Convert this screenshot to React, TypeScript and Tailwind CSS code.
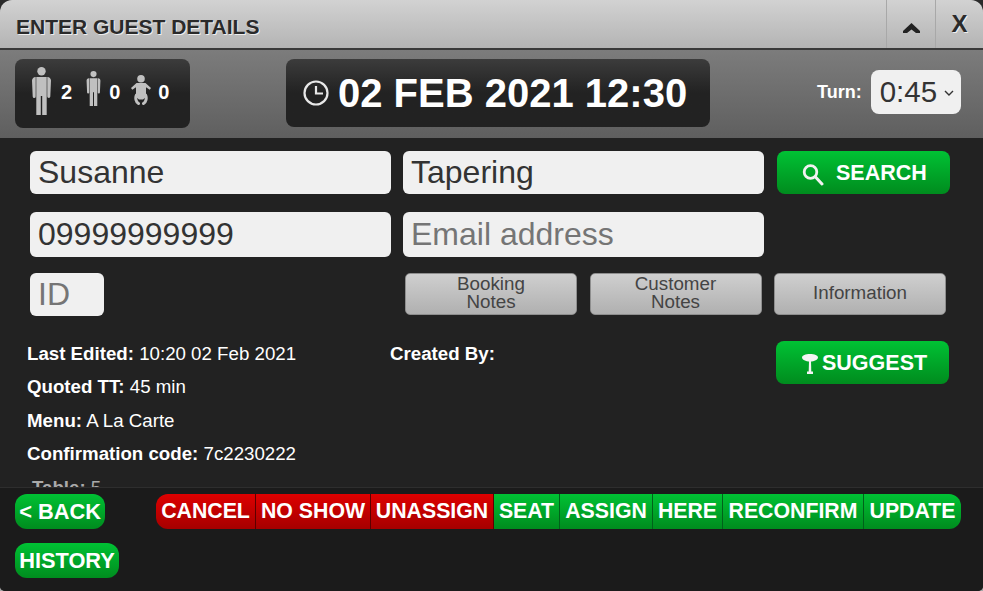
import React from 'react';

const PersonIcon = ({ className }: { className: string }) => (
  <svg viewBox="0 0 19 48" className={className} fill="#c0c0c0">
    <circle cx="9.500" cy="4.200" r="4.200" />
    <path d="M3.700 10V29.500a1.500 1.500 0 0 1-3 0L0 13.500A3.500 3.500 0 0 1 3.700 10z" />
    <path d="M15.300 10V29.500a1.500 1.500 0 0 0 3 0l.7-16A3.500 3.500 0 0 0 15.300 10z" />
    <path d="M4.300 10h10.400v38H10.200V29H8.800v19H4.300z" />
  </svg>
);

const BabyIcon = ({ className }: { className: string }) => (
  <svg viewBox="0 0 20 30" className={className} fill="#c0c0c0">
    <circle cx="10" cy="3.800" r="3.800" />
    <path d="M5.500 8h9l5.500 5-1.300 1.800-3.700-2.600v7h-10v-7l-3.700 2.600L0 13z" />
    <path d="M5 19h10v3l-3 2.500H8L5 22z" />
    <path d="M5.500 20C4 23 5 27 7.500 28.500M14.500 20C16 23 15 27 12.500 28.500" fill="none" stroke="#c0c0c0" strokeWidth="3" strokeLinecap="round" />
  </svg>
);

const ClockIcon = () => (
  <svg viewBox="0 0 26 26" className="w-[26px] h-[26px]" fill="none" stroke="#e8e8e8" strokeWidth="2.200">
    <circle cx="13" cy="13" r="11.500" />
    <path d="M13 6v7.500h7" />
  </svg>
);

const SearchIcon = () => (
  <svg viewBox="0 0 24 24" className="w-[24px] h-[24px] mt-[2px]" fill="none" stroke="#f2f2f2">
    <circle cx="10.500" cy="9" r="6.300" strokeWidth="2.800" />
    <path d="M15.500 14l6.500 7" strokeWidth="3" strokeLinecap="round" />
  </svg>
);

const TableIcon = () => (
  <svg viewBox="0 0 16 20" className="w-[16px] h-[20px]" fill="#f4f4f4">
    <path d="M0 3.500C0 1.500 3.500 0 8 0s8 1.500 8 3.500S12.500 7.500 8 7.500 0 5.500 0 3.500z" />
    <path d="M7 7h2l.3 11H6.700z" />
    <path d="M5 17.500h6V20H5z" />
  </svg>
);

const fieldClass =
  "bg-[#f0f0f0] rounded-[6px] px-2 pb-[2px] text-[32px] text-[#333] placeholder:text-[#757575] outline-none font-['Liberation_Sans',sans-serif]";

const greenGradient = 'bg-gradient-to-b from-[#00c234] to-[#008c1e]';
const redGradient = 'bg-gradient-to-b from-[#de0000] to-[#a60000]';
const greyGradient = 'bg-gradient-to-b from-[#cfcfcf] to-[#b0b0b0]';

const NoteButton = ({ children }: { children: React.ReactNode }) => (
  <div className={`w-[172px] h-[42px] pb-[3px] rounded-[5px] border border-[#8e8e8e] ${greyGradient} text-[#444] text-[18.8px] leading-[18px] text-center flex items-center justify-center`}>
    <span>{children}</span>
  </div>
);

const Info = ({ label, value }: { label: string; value?: string }) => (
  <div className="h-[33.4px] text-[18.7px] leading-[22px] text-white whitespace-nowrap">
    <b>{label}</b> {value}
  </div>
);

const actions = [
  { label: 'CANCEL', cls: `w-[100px] border-[#5c0000] ${redGradient}` },
  { label: 'NO SHOW', cls: `w-[115px] border-[#5c0000] ${redGradient}` },
  { label: 'UNASSIGN', cls: `w-[123px] border-[#5c0000] ${redGradient}` },
  { label: 'SEAT', cls: `w-[66px] border-[#00621a] ${greenGradient}` },
  { label: 'ASSIGN', cls: `w-[93px] border-[#00621a] ${greenGradient}` },
  { label: 'HERE', cls: `w-[70px] border-[#00621a] ${greenGradient}` },
  { label: 'RECONFIRM', cls: `w-[141px] border-[#00621a] ${greenGradient}` },
  { label: 'UPDATE', cls: `w-[97px] border-[#00621a] ${greenGradient}` },
];

const PillButton = ({ children, className }: { children: React.ReactNode; className: string }) => (
  <div className={`h-[35px] rounded-[12px] ${greenGradient} text-white font-bold text-[21.8px] leading-[35px] text-center ${className}`}>
    {children}
  </div>
);

export default function App() {
  return (
    <div className="w-[983px] h-[591px] bg-gradient-to-b from-[#2a2a2a] from-95% to-[#aaa]">
      <div className="w-full h-full overflow-hidden flex flex-col bg-[#222] rounded-t-[12px] rounded-b-[5px] font-['Liberation_Sans',sans-serif]">
        {/* Title bar */}
        <div className="h-[50px] shrink-0 flex bg-gradient-to-b from-[#d2d2d2] to-[#b4b4b4] border-b-2 border-[#3a3a3a]">
          <div className="flex-1 pl-[16px] pt-[15px] text-[21px] leading-[24px] font-bold text-[#2a2a2a] [text-shadow:1px_1px_0_#eee]">
            ENTER GUEST DETAILS
          </div>
          <div className="w-[49px] border-l border-[#a8a8a8] flex items-center justify-center">
            <svg viewBox="0 0 17 10" className="w-[17px] h-[10px] mt-[8px]" fill="#222">
              <path d="M8.500 0L17 8v2h-4L8.500 6.500 4 10H0V8z" />
            </svg>
          </div>
          <div className="w-[48px] border-l border-[#a8a8a8] text-center text-[24px] leading-[48px] font-bold text-[#2a2a2a] [text-shadow:1px_1px_0_#eee]">X</div>
        </div>

        {/* Covers, date and turn */}
        <div className="h-[88px] shrink-0 flex items-start bg-gradient-to-b from-[#7c7c7c] to-[#5f5f5f] pl-[15px] pt-[9px]">
          <div className="w-[175px] h-[69px] rounded-[8px] bg-gradient-to-b from-[#3c3c3c] via-[#222] to-[#222] flex items-center pl-[17px] text-white font-bold text-[20px]">
            <PersonIcon className="w-[19px] h-[48px] -mt-[5px]" />
            <span className="ml-[10px] -mt-[3px]">2</span>
            <PersonIcon className="w-[15px] h-[35px] ml-[14px] -mt-[10px]" />
            <span className="ml-[8px] -mt-[3px]">0</span>
            <BabyIcon className="w-[20px] h-[30px] ml-[11px] -mt-[7px]" />
            <span className="ml-[7px] -mt-[3px]">0</span>
          </div>
          <div className="ml-[96px] w-[424px] h-[68px] rounded-[8px] bg-gradient-to-b from-[#3c3c3c] via-[#222] to-[#222] flex items-center pl-[17px] text-white font-bold text-[40px]">
            <ClockIcon />
            <span className="ml-[9px]">02 FEB 2021 12:30</span>
          </div>
          <div className="ml-[107px] mt-[11px] flex items-center">
            <span className="text-white font-bold text-[18px]">Turn:</span>
            <div className="relative ml-[9px]">
              <select defaultValue="0:45" className="block w-[90px] h-[44px] rounded-[8px] bg-[#f0f0f0] text-[#333] text-[29.500px] pl-[9px] outline-none appearance-none font-['Liberation_Sans',sans-serif]">
                <option>0:45</option>
              </select>
              <svg viewBox="0 0 10 6" className="absolute right-[7px] top-[20px] w-[10px] h-[6px]" fill="none" stroke="#333" strokeWidth="1.400">
                <path d="M1 1l4 4 4-4" />
              </svg>
            </div>
          </div>
        </div>

        {/* Guest form */}
        <div className="h-[349px] shrink-0 overflow-hidden pl-[30px] pt-[13px] flex">
          <div className="w-[746px] shrink-0">
            <div className="flex gap-[12px]">
              <input readOnly value="Susanne" className={`${fieldClass} w-[361px] h-[43px]`} />
              <input readOnly value="Tapering" className={`${fieldClass} w-[361px] h-[43px]`} />
            </div>
            <div className="flex gap-[12px] mt-[18px]">
              <input readOnly value="09999999999" className={`${fieldClass} w-[361px] h-[45px]`} />
              <input readOnly placeholder="Email address" className={`${fieldClass} w-[361px] h-[45px]`} />
            </div>
            <div className="flex mt-[16px]">
              <input readOnly placeholder="ID" className={`${fieldClass} w-[74px] h-[43px]`} />
              <div className="flex gap-[12.500px] ml-[301px]">
                <NoteButton>Booking<br />Notes</NoteButton>
                <NoteButton>Customer<br />Notes</NoteButton>
                <NoteButton>Information</NoteButton>
              </div>
            </div>
            <div className="flex mt-[27px] -ml-[3px]">
              <div className="w-[363px] shrink-0">
                <Info label="Last Edited:" value="10:20 02 Feb 2021" />
                <Info label="Quoted TT:" value="45 min" />
                <Info label="Menu:" value="A La Carte" />
                <Info label="Confirmation code:" value="7c2230222" />
                <div className="pl-[5px] text-[18.7px] leading-[22px] text-[#aaa]"><b>Table:</b> 5</div>
              </div>
              <Info label="Created By:" />
            </div>
          </div>
          <div className="shrink-0 ml-[1px]">
            <div className={`w-[173px] h-[43px] pt-[2px] rounded-[8px] ${greenGradient} flex items-center pl-[23px] text-white font-bold text-[21.500px]`}>
              <SearchIcon />
              <span className="ml-[12px]">SEARCH</span>
            </div>
            <div className={`w-[173px] h-[43px] pt-[2px] mt-[147px] -ml-[1px] rounded-[8px] ${greenGradient} flex items-center pl-[26px] text-white font-bold text-[21.500px]`}>
              <TableIcon />
              <span className="ml-[4px]">SUGGEST</span>
            </div>
          </div>
        </div>

        {/* Actions */}
        <div className="flex-1 bg-[#1b1b1b] border-t border-[#2e2e2e] pl-[15px] pt-[6px] flex items-start">
          <div className="w-[141px] shrink-0 flex flex-col gap-[14px]">
            <PillButton className="w-[90px]">&lt; BACK</PillButton>
            <PillButton className="w-[104px]">HISTORY</PillButton>
          </div>
          <div className="flex h-[35px] rounded-[12px] overflow-hidden text-white font-bold text-[21.300px] leading-[35px]">
            {actions.map((a) => (
              <div key={a.label} className={`whitespace-nowrap text-center border-r last:border-r-0 ${a.cls}`}>{a.label}</div>
            ))}
          </div>
        </div>
      </div>
    </div>
  );
}
